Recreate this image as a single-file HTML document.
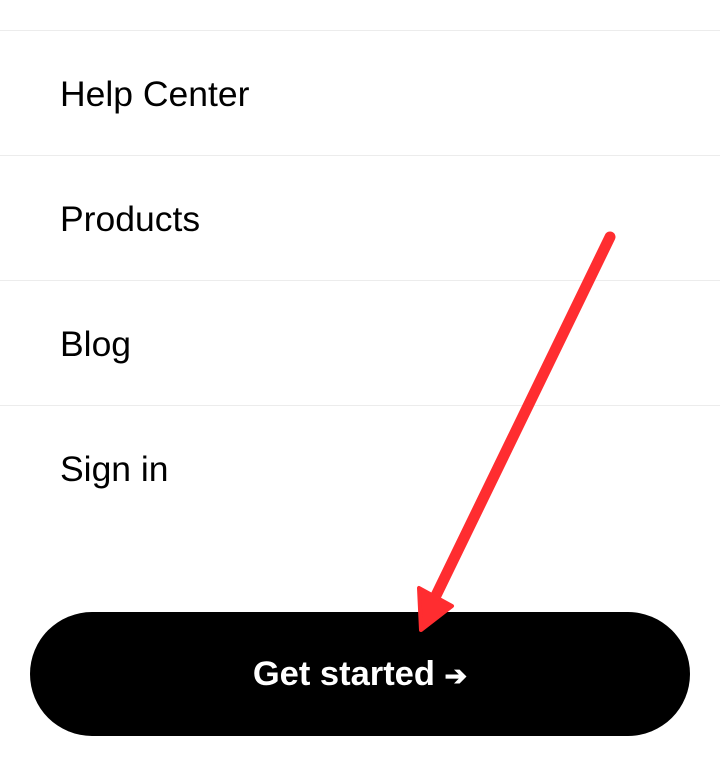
<!DOCTYPE html>
<html><head><style>
html,body{margin:0;padding:0;background:#fff;width:720px;height:765px;overflow:hidden;font-family:"Liberation Sans",sans-serif;position:relative}
.line{position:absolute;left:0;width:720px;height:1px;background:#ececec}
.item{position:absolute;left:60px;font-size:35.5px;color:#000;line-height:40px}
.btn{position:absolute;left:30px;top:612px;width:660px;height:124px;border-radius:62px;background:#000;color:#fff;font-weight:bold;font-size:34.5px;text-align:center;line-height:124px}
svg{position:absolute;left:0;top:0}
</style></head><body>
<div class="line" style="top:30px"></div>
<div class="item" style="top:74px">Help Center</div>
<div class="line" style="top:155px"></div>
<div class="item" style="top:199px">Products</div>
<div class="line" style="top:280px"></div>
<div class="item" style="top:324px">Blog</div>
<div class="line" style="top:405px"></div>
<div class="item" style="top:449px">Sign in</div>
<div class="btn">Get started <span style="font-size:27px">➔</span></div>
<svg width="720" height="765">
<path d="M610,237 L428,612" stroke="#ff2d30" stroke-width="11" stroke-linecap="round" fill="none"/>
<path d="M419,588 L421,630 L452,606 Z" fill="#ff2d30" stroke="#ff2d30" stroke-width="4" stroke-linejoin="round"/>
</svg>
</body></html>
